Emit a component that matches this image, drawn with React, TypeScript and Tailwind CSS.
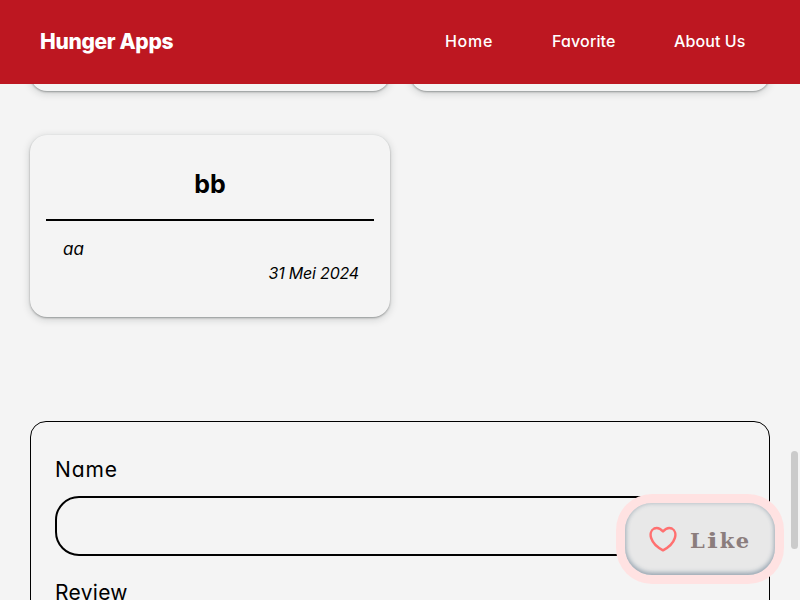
import React from "react";

const cardShadow =
  "rounded-[17px] bg-[#f4f4f4] shadow-[0_1px_2px_rgba(14,20,20,0.34),0_2px_8px_rgba(14,25,25,0.18)]";

function Header() {
  return (
    <header className="relative z-10 flex h-[84px] shrink-0 items-center justify-between bg-[#bd1721] pl-10 pr-[54px] text-white">
      <h1 className="text-[21px] leading-8 font-extrabold tracking-[-0.33px]">Hunger Apps</h1>
      <nav className="-mt-0.5 flex gap-[59px] text-[16px] leading-6 font-medium">
        <a className="w-12 whitespace-nowrap tracking-[0.7px]">Home</a>
        <a className="w-[63px] whitespace-nowrap tracking-[0.15px]">Favorite</a>
        <a className="w-[72px] whitespace-nowrap tracking-[0.1px]">About Us</a>
      </nav>
    </header>
  );
}

function ReviewCard() {
  return (
    <article className={`h-[182px] px-4 pt-[30px] ${cardShadow}`}>
      <h2 className="h-14 border-b-2 border-black text-center text-[25px] leading-[39px] font-bold">bb</h2>
      <div className="px-[15px] pt-4 text-[16px] leading-6 italic">
        <p className="pl-0.5 text-[17px]">aa</p>
        <p className="text-right tracking-[-0.2px]">31 Mei 2024</p>
      </div>
    </article>
  );
}

function LikeButton() {
  return (
    <button className="absolute left-[625px] top-[503px] z-20 flex h-[72px] w-[150px] items-center rounded-[27px] bg-[#e8e8e8] pl-6 shadow-[0_0_0_9px_#ffe2e2,inset_0_-2px_5px_#98a5b1,inset_0_0_5px_#c2c9ce]">
      <svg width="28" height="26" viewBox="0 0 28 26" fill="none" stroke="#ff7070" strokeWidth="2.5" strokeLinejoin="round">
        <path d="M14 5.3C11.4 2.5 8 1.2 5.2 2.5C1.8 4.2 1 8.5 2.2 12.2C3.8 17.2 9 21.8 14 24.3C19 21.8 24.2 17.2 25.8 12.2C27 8.5 26.2 4.2 22.8 2.5C20 1.2 16.6 2.5 14 5.3Z" />
      </svg>
      <span className="ml-[13px] mt-1 flex font-['DejaVu_Serif'] text-[21px] leading-6 font-bold text-[#8b7d7d]">
        <span className="mr-[2px]">L</span>
        <span className="mr-[5px] origin-left scale-x-[1.35]">i</span>
        <span className="mr-[1.5px]">k</span>
        <span>e</span>
      </span>
    </button>
  );
}

export default function App() {
  return (
    <div className="relative flex h-[600px] w-[800px] flex-col overflow-hidden bg-[#f4f4f4] font-['Inter',sans-serif] text-black [font-feature-settings:'cv11']">
      <Header />
      <section className="-mt-[89px] grid shrink-0 grid-cols-2 gap-x-5 gap-y-11 px-[30px]">
        <div className={`h-24 ${cardShadow}`} />
        <div className={`h-24 ${cardShadow}`} />
        <ReviewCard />
      </section>
      <form className="mx-[30px] mt-[104px] h-[240px] shrink-0 rounded-t-2xl border border-black px-6 pt-8 text-[21px] leading-8">
        <label className="block tracking-[0.9px]">Name</label>
        <input className="mt-[10px] block h-[60px] w-full rounded-[24px] border-2 border-black" />
        <label className="mt-[21px] block tracking-[0.3px]">Review</label>
      </form>
      <div className="absolute left-[791px] top-[451px] h-[98px] w-[7px] rounded-full bg-[#cbcbcb]" />
      <LikeButton />
    </div>
  );
}
